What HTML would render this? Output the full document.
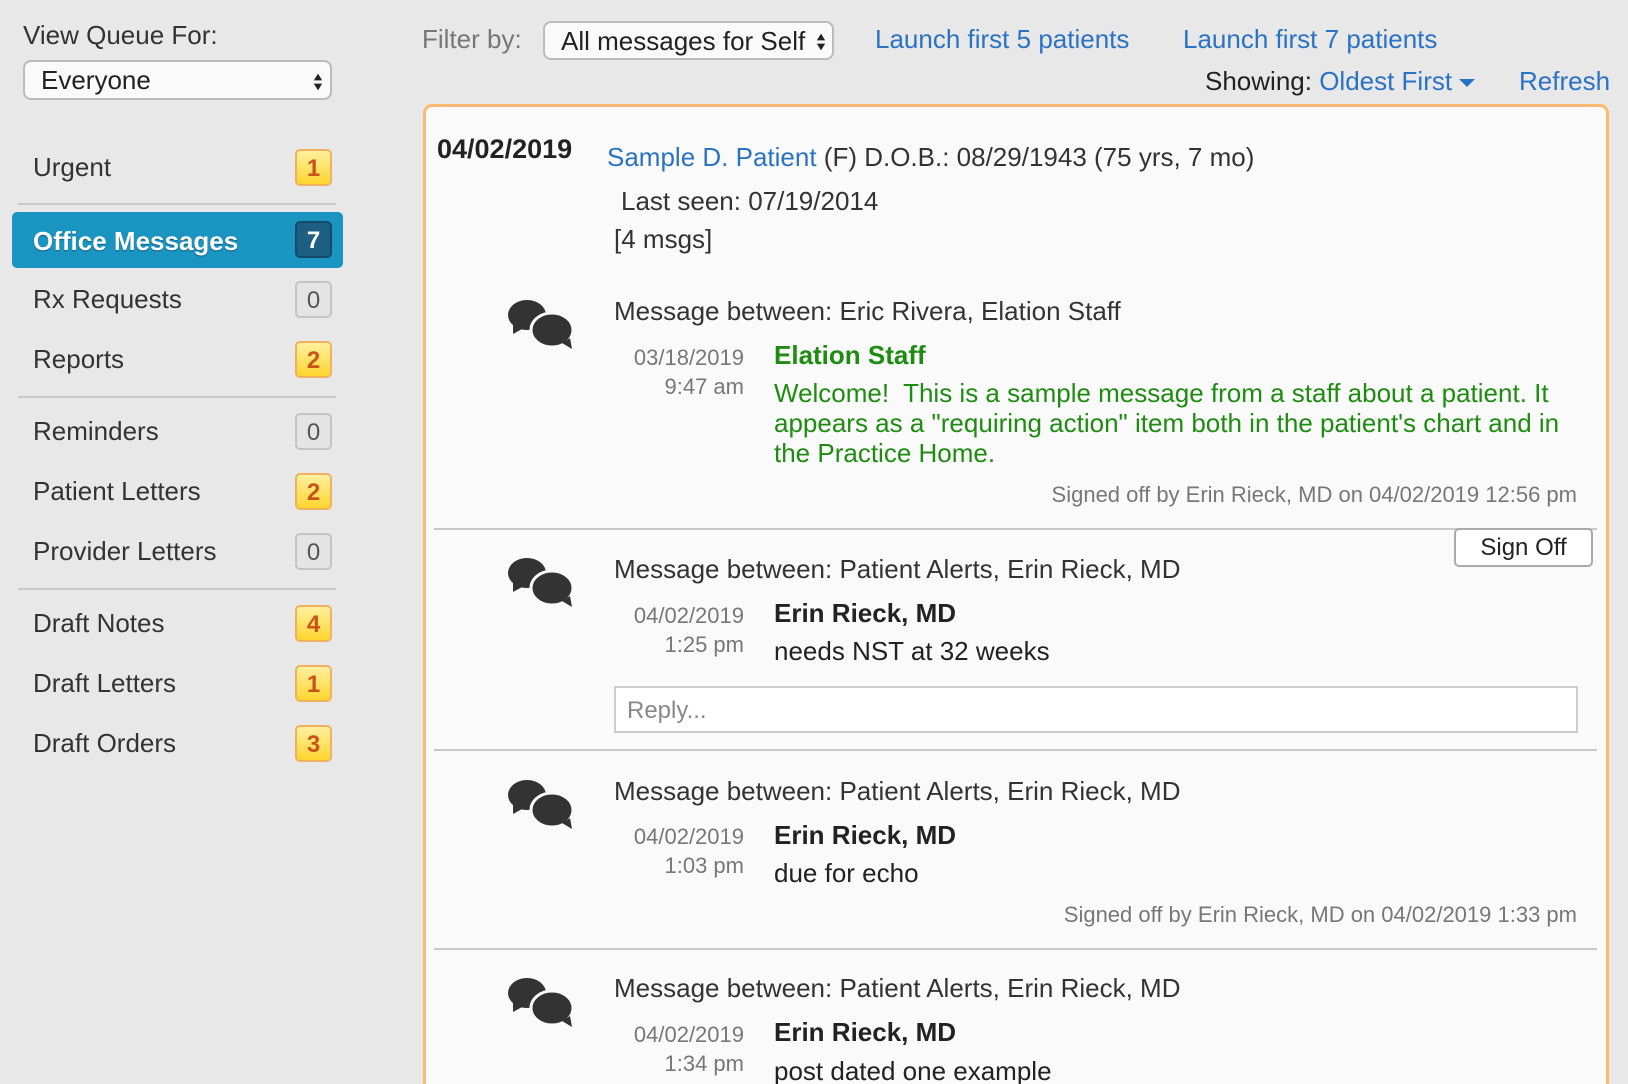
<!DOCTYPE html>
<html><head><meta charset="utf-8"><style>
*{margin:0;padding:0;box-sizing:border-box}
html,body{width:1628px;height:1084px;overflow:hidden}
body{background:#e8e8e8;font-family:"Liberation Sans",Arial,sans-serif;color:#333}
#w{position:relative;width:1628px;height:1084px;overflow:hidden}
.a{position:absolute;white-space:nowrap;line-height:30px}
.t{font-size:26px}
.lk{color:#2a72c4}
.sep{position:absolute;height:2px;background:#c8c8c8}
.badge{position:absolute;left:295px;width:37px;height:37px;border-radius:5px;font-size:24px;text-align:center;line-height:35px;font-weight:bold}
.y{background:linear-gradient(#fff0a0,#ffd52e);border:2px solid #f0b060;color:#c9531b}
.g{background:#e4e4e4;border:2px solid #c4c4c4;color:#555;font-weight:normal}
.sel{position:absolute;background:#fafafa;border:2px solid #bbb;border-radius:8px}
.arr{position:absolute;right:8px;top:8px;width:10px}
.dt{font-size:22px;color:#777;text-align:right;width:130px}
.sg{font-size:22px;color:#777}
.ic{position:absolute;left:507px;width:66px;height:52px}
</style></head><body><div id="w">
<div class="a t" style="left:23px;top:20px">View Queue For:</div>
<div class="sel" style="left:23px;top:60px;width:309px;height:40px"><div class="a t" style="left:16px;top:3px;color:#222">Everyone</div>
<svg class="arr" style="top:9px;right:7px" width="12" height="22" viewBox="0 0 12 22"><path d="M6 1L11 9H1Z M6 21L11 13H1Z" fill="#222"/></svg></div>

<div class="a t" style="left:33px;top:152px">Urgent</div><div class="badge y" style="top:149px">1</div>
<div class="sep" style="left:18px;top:203px;width:318px"></div>
<div style="position:absolute;left:12px;top:212px;width:331px;height:56px;background:#1a94c0;border-radius:5px"></div>
<div class="a t" style="left:33px;top:226px;color:#fff;font-weight:bold;text-shadow:0 1px 1px #0b5d80">Office Messages</div>
<div class="badge" style="top:221px;background:#1d5f82;border:2px solid #134b69;color:#fff">7</div>
<div class="a t" style="left:33px;top:284px">Rx Requests</div><div class="badge g" style="top:281px">0</div>
<div class="a t" style="left:33px;top:344px">Reports</div><div class="badge y" style="top:341px">2</div>
<div class="sep" style="left:18px;top:396px;width:318px"></div>
<div class="a t" style="left:33px;top:416px">Reminders</div><div class="badge g" style="top:413px">0</div>
<div class="a t" style="left:33px;top:476px">Patient Letters</div><div class="badge y" style="top:473px">2</div>
<div class="a t" style="left:33px;top:536px">Provider Letters</div><div class="badge g" style="top:533px">0</div>
<div class="sep" style="left:18px;top:588px;width:318px"></div>
<div class="a t" style="left:33px;top:608px">Draft Notes</div><div class="badge y" style="top:605px">4</div>
<div class="a t" style="left:33px;top:668px">Draft Letters</div><div class="badge y" style="top:665px">1</div>
<div class="a t" style="left:33px;top:728px">Draft Orders</div><div class="badge y" style="top:725px">3</div>

<div class="a t" style="left:422px;top:24px;color:#777">Filter by:</div>
<div class="sel" style="left:543px;top:21px;width:291px;height:39px"><div class="a t" style="left:16px;top:3px;color:#222">All messages for Self</div>
<svg class="arr" style="top:8px;right:6px" width="12" height="22" viewBox="0 0 12 22"><path d="M6 1L11 9H1Z M6 21L11 13H1Z" fill="#222"/></svg></div>
<div class="a t lk" style="left:875px;top:24px">Launch first 5 patients</div>
<div class="a t lk" style="left:1183px;top:24px">Launch first 7 patients</div>
<div class="a t" style="left:1205px;top:66px;color:#222">Showing: <span class="lk">Oldest First</span> <svg width="16" height="9" style="vertical-align:middle"><path d="M0 0H16L8 8Z" fill="#2a72c4"/></svg></div>
<div class="a t lk" style="left:1519px;top:66px">Refresh</div>

<div style="position:absolute;left:423px;top:104px;width:1186px;height:1100px;background:#fafafa;border:3px solid #fdb871;border-radius:9px"></div>
<div class="a" style="left:437px;top:134px;font-size:27px;font-weight:bold;color:#222">04/02/2019</div>
<div class="a t" style="left:607px;top:142px"><span class="lk">Sample D. Patient</span> (F)&nbsp;D.O.B.: 08/29/1943 (75 yrs, 7 mo)</div>
<div class="a t" style="left:621px;top:186px">Last seen: 07/19/2014</div>
<div class="a t" style="left:614px;top:224px">[4 msgs]</div>

<svg class="ic" style="top:298px" viewBox="0 0 66 52"><ellipse cx="20" cy="17" rx="19" ry="15" fill="#333"/><path d="M6 26L6 36L17 30Z" fill="#333"/><ellipse cx="45" cy="32" rx="21" ry="17" fill="#333" stroke="#fafafa" stroke-width="3"/><path d="M55 45L65 51L63 40Z" fill="#333"/></svg>
<div class="a t" style="left:614px;top:296px">Message between: Eric Rivera, Elation Staff</div>
<div class="a dt" style="left:614px;top:343px">03/18/2019</div>
<div class="a dt" style="left:614px;top:372px">9:47 am</div>
<div class="a t" style="left:774px;top:340px;color:#1e8c10;font-weight:bold">Elation Staff</div>
<div class="a t" style="left:774px;top:378px;color:#1e8c10;line-height:30px">Welcome!&nbsp; This is a sample message from a staff about a patient. It<br>appears as a "requiring action" item both in the patient's chart and in<br>the Practice Home.</div>
<div class="a sg" style="right:51px;top:480px">Signed off by Erin Rieck, MD on 04/02/2019 12:56 pm</div>
<div class="sep" style="left:434px;top:528px;width:1163px"></div>
<div style="position:absolute;left:1454px;top:528px;width:139px;height:39px;border:2px solid #aaa;border-radius:5px;background:#fff;font-size:24px;text-align:center;line-height:35px;color:#222">Sign Off</div>

<svg class="ic" style="top:556px" viewBox="0 0 66 52"><ellipse cx="20" cy="17" rx="19" ry="15" fill="#333"/><path d="M6 26L6 36L17 30Z" fill="#333"/><ellipse cx="45" cy="32" rx="21" ry="17" fill="#333" stroke="#fafafa" stroke-width="3"/><path d="M55 45L65 51L63 40Z" fill="#333"/></svg>
<div class="a t" style="left:614px;top:554px">Message between: Patient Alerts, Erin Rieck, MD</div>
<div class="a dt" style="left:614px;top:601px">04/02/2019</div>
<div class="a dt" style="left:614px;top:630px">1:25 pm</div>
<div class="a t" style="left:774px;top:598px;font-weight:bold;color:#222">Erin Rieck, MD</div>
<div class="a t" style="left:774px;top:636px;color:#222">needs NST at 32 weeks</div>
<div style="position:absolute;left:614px;top:686px;width:964px;height:47px;border:2px solid #ccc;background:#fff"></div>
<div class="a" style="left:627px;top:696px;color:#888;font-size:24px">Reply...</div>
<div class="sep" style="left:434px;top:749px;width:1163px"></div>

<svg class="ic" style="top:778px" viewBox="0 0 66 52"><ellipse cx="20" cy="17" rx="19" ry="15" fill="#333"/><path d="M6 26L6 36L17 30Z" fill="#333"/><ellipse cx="45" cy="32" rx="21" ry="17" fill="#333" stroke="#fafafa" stroke-width="3"/><path d="M55 45L65 51L63 40Z" fill="#333"/></svg>
<div class="a t" style="left:614px;top:776px">Message between: Patient Alerts, Erin Rieck, MD</div>
<div class="a dt" style="left:614px;top:822px">04/02/2019</div>
<div class="a dt" style="left:614px;top:851px">1:03 pm</div>
<div class="a t" style="left:774px;top:820px;font-weight:bold;color:#222">Erin Rieck, MD</div>
<div class="a t" style="left:774px;top:858px;color:#222">due for echo</div>
<div class="a sg" style="right:51px;top:900px">Signed off by Erin Rieck, MD on 04/02/2019 1:33 pm</div>
<div class="sep" style="left:434px;top:948px;width:1163px"></div>

<svg class="ic" style="top:976px" viewBox="0 0 66 52"><ellipse cx="20" cy="17" rx="19" ry="15" fill="#333"/><path d="M6 26L6 36L17 30Z" fill="#333"/><ellipse cx="45" cy="32" rx="21" ry="17" fill="#333" stroke="#fafafa" stroke-width="3"/><path d="M55 45L65 51L63 40Z" fill="#333"/></svg>
<div class="a t" style="left:614px;top:973px">Message between: Patient Alerts, Erin Rieck, MD</div>
<div class="a dt" style="left:614px;top:1020px">04/02/2019</div>
<div class="a dt" style="left:614px;top:1049px">1:34 pm</div>
<div class="a t" style="left:774px;top:1017px;font-weight:bold;color:#222">Erin Rieck, MD</div>
<div class="a t" style="left:774px;top:1056px;color:#222">post dated one example</div>
</div></body></html>
